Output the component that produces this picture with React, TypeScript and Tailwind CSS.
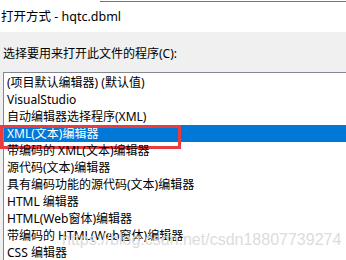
const items = [
  '(项目默认编辑器) (默认值)',
  'VisualStudio',
  '自动编辑器选择程序(XML)',
  'XML(文本)编辑器',
  '带编码的 XML(文本)编辑器',
  '源代码(文本)编辑器',
  '具有编码功能的源代码(文本)编辑器',
  'HTML 编辑器',
  'HTML(Web窗体)编辑器',
  '带编码的 HTML(Web窗体)编辑器',
  'CSS 编辑器',
]

const selected = 3

export default function App() {
  return (
    <div
      className="relative w-[346px] h-[260px] overflow-hidden bg-white text-[12px] text-black"
      style={{ fontFamily: '"Segoe UI", "Noto Sans", "Noto Sans CJK SC", sans-serif' }}
    >
      {/* window title */}
      <div className="bg-white">
        <div className="mt-px ml-[100px] h-px bg-[#47934a]" />
        <div className="h-[30px] flex items-center pl-px text-[12.5px]">打开方式 - hqtc.dbml</div>
      </div>

      {/* body */}
      <div className="bg-[#f0f0f0] h-[40px] pl-[3px] pt-[14px] leading-[16px]">
        选择要用来打开此文件的程序(C):
      </div>

      <div className="bg-[#f0f0f0] pl-[3px]">
        <div className="border-t border-l border-[#828790] bg-white pt-px">
          {items.map((item, i) => (
            <div
              key={item}
              className={`relative h-[17px] leading-[17px] pl-[3px] whitespace-nowrap ${
                i === selected ? 'bg-[#0078d7] text-white' : ''
              }`}
            >
              {item}
              {i === selected && (
                <div className="absolute left-[-4px] top-0 w-[181px] h-[24px] border-[3px] border-[#ea3b3f]" />
              )}
            </div>
          ))}
        </div>
      </div>

      {/* watermark */}
      <div
        className="absolute left-[62px] top-[228px] text-[16px] text-[#dcdcdc] whitespace-nowrap"
        style={{ fontFamily: '"Liberation Sans", Arial, sans-serif' }}
      >
        https://blog.csdn.net/csdn18807739274
      </div>
    </div>
  )
}
